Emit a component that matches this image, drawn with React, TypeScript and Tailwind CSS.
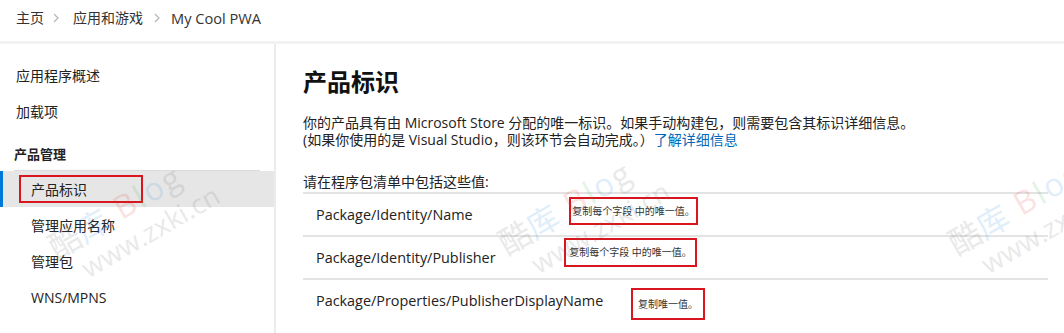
import React from "react";

const FONT = '"Open Sans", "Noto Sans CJK SC", sans-serif';

function Chevron() {
  return (
    <svg width="8" height="12" viewBox="0 0 8 12">
      <path d="M2 2 L6 6 L2 10" fill="none" stroke="#b5b5b5" strokeWidth="1.2" />
    </svg>
  );
}

function Watermark({ left, top }: { left: number; top: number }) {
  return (
    <div
      className="pointer-events-none absolute select-none opacity-[0.14] leading-none"
      style={{ left, top, transform: "rotate(-30deg)", transformOrigin: "0 0" }}
    >
      <div className="flex items-end whitespace-nowrap text-[32px]" style={{ fontFamily: '"Noto Sans CJK SC", sans-serif' }}>
        <span className="text-[#6a6a6a]">酷</span>
        <span className="text-[#2f8fe0]">库</span>
        <span className="ml-[12px] tracking-[2px] text-[#e5393b]" style={{ fontFamily: '"Open Sans", sans-serif' }}>B</span>
        <span className="tracking-[2px] text-[#3fb34f]" style={{ fontFamily: '"Open Sans", sans-serif' }}>l</span>
        <span className="tracking-[2px] text-[#2f8fe0]" style={{ fontFamily: '"Open Sans", sans-serif' }}>o</span>
        <span className="text-[#6a6a6a]" style={{ fontFamily: '"Open Sans", sans-serif' }}>g</span>
      </div>
      <div className="ml-[18px] mt-[6px] whitespace-nowrap text-[27px] text-[#6a6a6a]" style={{ fontFamily: '"Open Sans", sans-serif' }}>
        www.zxki.cn
      </div>
    </div>
  );
}

const rows = [
  { name: "Package/Identity/Name", note: "复制每个字段 中的唯一值。", box: "left-[266px] top-[3px] w-[129px] h-[28px]" },
  { name: "Package/Identity/Publisher", note: "复制每个字段 中的唯一值。", box: "left-[261px] top-[1px] w-[133px] h-[29px]" },
  { name: "Package/Properties/PublisherDisplayName", note: "复制唯一值。", box: "left-[328px] top-[8px] w-[74px] h-[32px]" },
];

export default function App() {
  return (
    <div className="relative h-[333px] w-[1064px] overflow-hidden bg-white text-[#222]" style={{ fontFamily: FONT }}>
      {/* breadcrumb */}
      <div className="flex h-[41px] items-start pl-[16px] pt-[8px] text-[14px] leading-[20px] text-[#333]">
        <span>主页</span>
        <span className="ml-[8px] mr-[13px] flex h-[20px] items-center"><Chevron /></span>
        <span>应用和游戏</span>
        <span className="ml-[10px] mr-[10px] flex h-[20px] items-center"><Chevron /></span>
        <span className="text-[14.6px]">My Cool PWA</span>
      </div>
      <div className="h-[3px] bg-[#f2f2f2]" />

      <div className="flex h-[289px]">
        {/* sidebar */}
        <div className="w-[276px] shrink-0 border-r-2 border-[#ececec] pt-[13px] text-[14px]">
          <div className="flex h-9 items-center pl-[16px]">应用程序概述</div>
          <div className="flex h-9 items-center pl-[16px]">加载项</div>
          <div className="mt-[16px] flex h-[20px] items-center pl-[14px] text-[13px] font-bold">产品管理</div>
          <div className="ml-[14px] mt-[5px] h-[1px] w-[246px] bg-[#dcdcdc]" />
          <div className="flex h-9 items-center bg-[#e6e6e6]">
            <div className="h-full w-[3px] bg-[#0078d7]" />
            <div className="ml-[16px] flex h-[28px] w-[124px] items-center border-2 border-[#d8161d] pl-[10px]">产品标识</div>
          </div>
          <div className="flex h-9 items-center pl-[31px]">管理应用名称</div>
          <div className="flex h-9 items-center pl-[31px]">管理包</div>
          <div className="flex h-9 items-center pl-[31px]">WNS/MPNS</div>
        </div>

        {/* main */}
        <div className="flex-1 pl-[27px] pt-[22px]">
          <h1 className="text-[24px] font-bold leading-[32px] text-[#111]">产品标识</h1>
          <p className="mt-[16px] text-[14px] leading-[17px]">
            你的产品具有由 Microsoft Store 分配的唯一标识。如果手动构建包，则需要包含其标识详细信息。
            <br />
            (如果你使用的是 Visual Studio，则该环节会自动完成。）<span className="text-[#0067b8]">了解详细信息</span>
          </p>
          <div className="mt-[24px] text-[14px] leading-[20px]">请在程序包清单中包括这些值:</div>
          <div className="w-[745px]">
            {rows.map((r) => (
              <div key={r.name} className="relative flex h-[43px] items-center border-t-2 border-[#e3e3e3] pl-[13px] text-[14.4px]">
                {r.name}
                <div className={`absolute flex items-center justify-center border-2 border-[#d8161d] text-[10px] text-[#333] ${r.box}`}>
                  {r.note}
                </div>
              </div>
            ))}
          </div>
        </div>
      </div>

      <Watermark left={42} top={234} />
      <Watermark left={492} top={230} />
      <Watermark left={942} top={230} />
    </div>
  );
}
